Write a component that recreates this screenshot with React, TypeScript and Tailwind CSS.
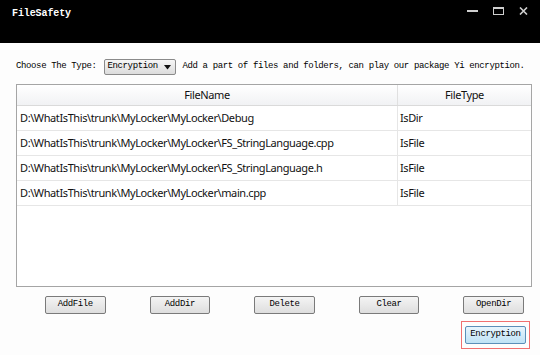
const files = [
  { name: "D:\\WhatIsThis\\trunk\\MyLocker\\MyLocker\\Debug", type: "IsDir" },
  { name: "D:\\WhatIsThis\\trunk\\MyLocker\\MyLocker\\FS_StringLanguage.cpp", type: "IsFile" },
  { name: "D:\\WhatIsThis\\trunk\\MyLocker\\MyLocker\\FS_StringLanguage.h", type: "IsFile" },
  { name: "D:\\WhatIsThis\\trunk\\MyLocker\\MyLocker\\main.cpp", type: "IsFile" },
];

const actions = ["AddFile", "AddDir", "Delete", "Clear", "OpenDir"];

const mono = "font-['Liberation_Mono',monospace] text-[9px] tracking-[-0.37px] text-black whitespace-nowrap";

const App = () => {
  return (
    <div className="w-[540px] h-[355px] flex flex-col bg-[#fdfdfd] overflow-hidden">
      {/* Title bar */}
      <div className="h-[43px] bg-black flex items-start justify-between shrink-0">
        <span className="pl-3 pt-[6px] text-white font-bold font-['Liberation_Mono',monospace] text-[10px] tracking-[-0.1px]">
          FileSafety
        </span>
        <div className="flex items-center gap-[15px] pt-[7px] pr-[12px]">
          <svg width="11" height="8" viewBox="0 0 11 8">
            <rect x="0" y="3" width="11" height="2" fill="#cfcfcf" />
          </svg>
          <svg width="11" height="8" viewBox="0 0 11 8">
            <rect x="0.5" y="0.5" width="10" height="7" fill="none" stroke="#cfcfcf" />
            <rect x="0" y="0" width="11" height="2" fill="#cfcfcf" />
          </svg>
          <svg width="9" height="8" viewBox="0 0 9 8">
            <path d="M1 0.5 L8 7.5 M8 0.5 L1 7.5" stroke="#cfcfcf" strokeWidth="1.6" />
          </svg>
        </div>
      </div>

      <div className="flex flex-col px-4 pt-4">
        {/* Type row */}
        <div className={`flex items-center h-[16px] ${mono}`}>
          <span className="shrink-0">Choose The Type:</span>
          <div className="shrink-0 ml-[7px] w-[72px] h-[16px] border border-[#8a8a8a] rounded-[2px] bg-gradient-to-b from-[#f6f6f6] to-[#dcdcdc] flex items-center justify-between pl-[3px] pr-[4px]">
            <span>Encryption</span>
            <svg width="7" height="5" viewBox="0 0 7 5">
              <path d="M0 0 L7 0 L3.5 4.5 Z" fill="#111" />
            </svg>
          </div>
          <span className="shrink-0 ml-[7px]">Add a part of files and folders, can play our package Yi encryption.</span>
        </div>

        {/* File table */}
        <div className="mt-[9px] w-[516px] h-[203px] border border-[#a5a5a5] bg-white font-['Noto_Sans',sans-serif] text-[11px] tracking-[-0.4px] text-[#111]">
          <div className="flex h-[21px] border-b border-[#dadada] bg-gradient-to-b from-white to-[#f1f2f4]">
            <div className="w-[381px] flex items-center justify-center border-r border-[#e0e0e0]">FileName</div>
            <div className="flex-1 flex items-center justify-center">FileType</div>
          </div>
          {files.map((f) => (
            <div key={f.name} className="flex h-[25px] border-b border-[#e6e6e6]">
              <div className="w-[381px] flex items-center pl-[3px] border-r border-[#e6e6e6] whitespace-nowrap">
                {f.name}
              </div>
              <div className="flex-1 flex items-center pl-[2px]">{f.type}</div>
            </div>
          ))}
        </div>

        {/* Buttons */}
        <div className="mt-[9px] flex gap-[44px] pl-[29px]">
          {actions.map((a) => (
            <button
              key={a}
              className={`w-[61px] h-[18px] border border-[#7a7a7a] rounded-[2px] bg-gradient-to-b from-[#f4f4f4] to-[#dedede] flex items-center justify-center ${mono}`}
            >
              {a}
            </button>
          ))}
        </div>

        <div className="flex justify-end mt-[7px] -mr-[6px]">
          <div className="w-[69px] h-[28px] border border-[#f07070] flex items-center justify-center">
            <button
              className={`w-[61px] h-[18px] border border-[#5b8fb8] rounded-[2px] bg-gradient-to-b from-[#e8f5fd] to-[#bfe2f5] flex items-center justify-center ${mono}`}
            >
              Encryption
            </button>
          </div>
        </div>
      </div>
    </div>
  );
};

export default App;
